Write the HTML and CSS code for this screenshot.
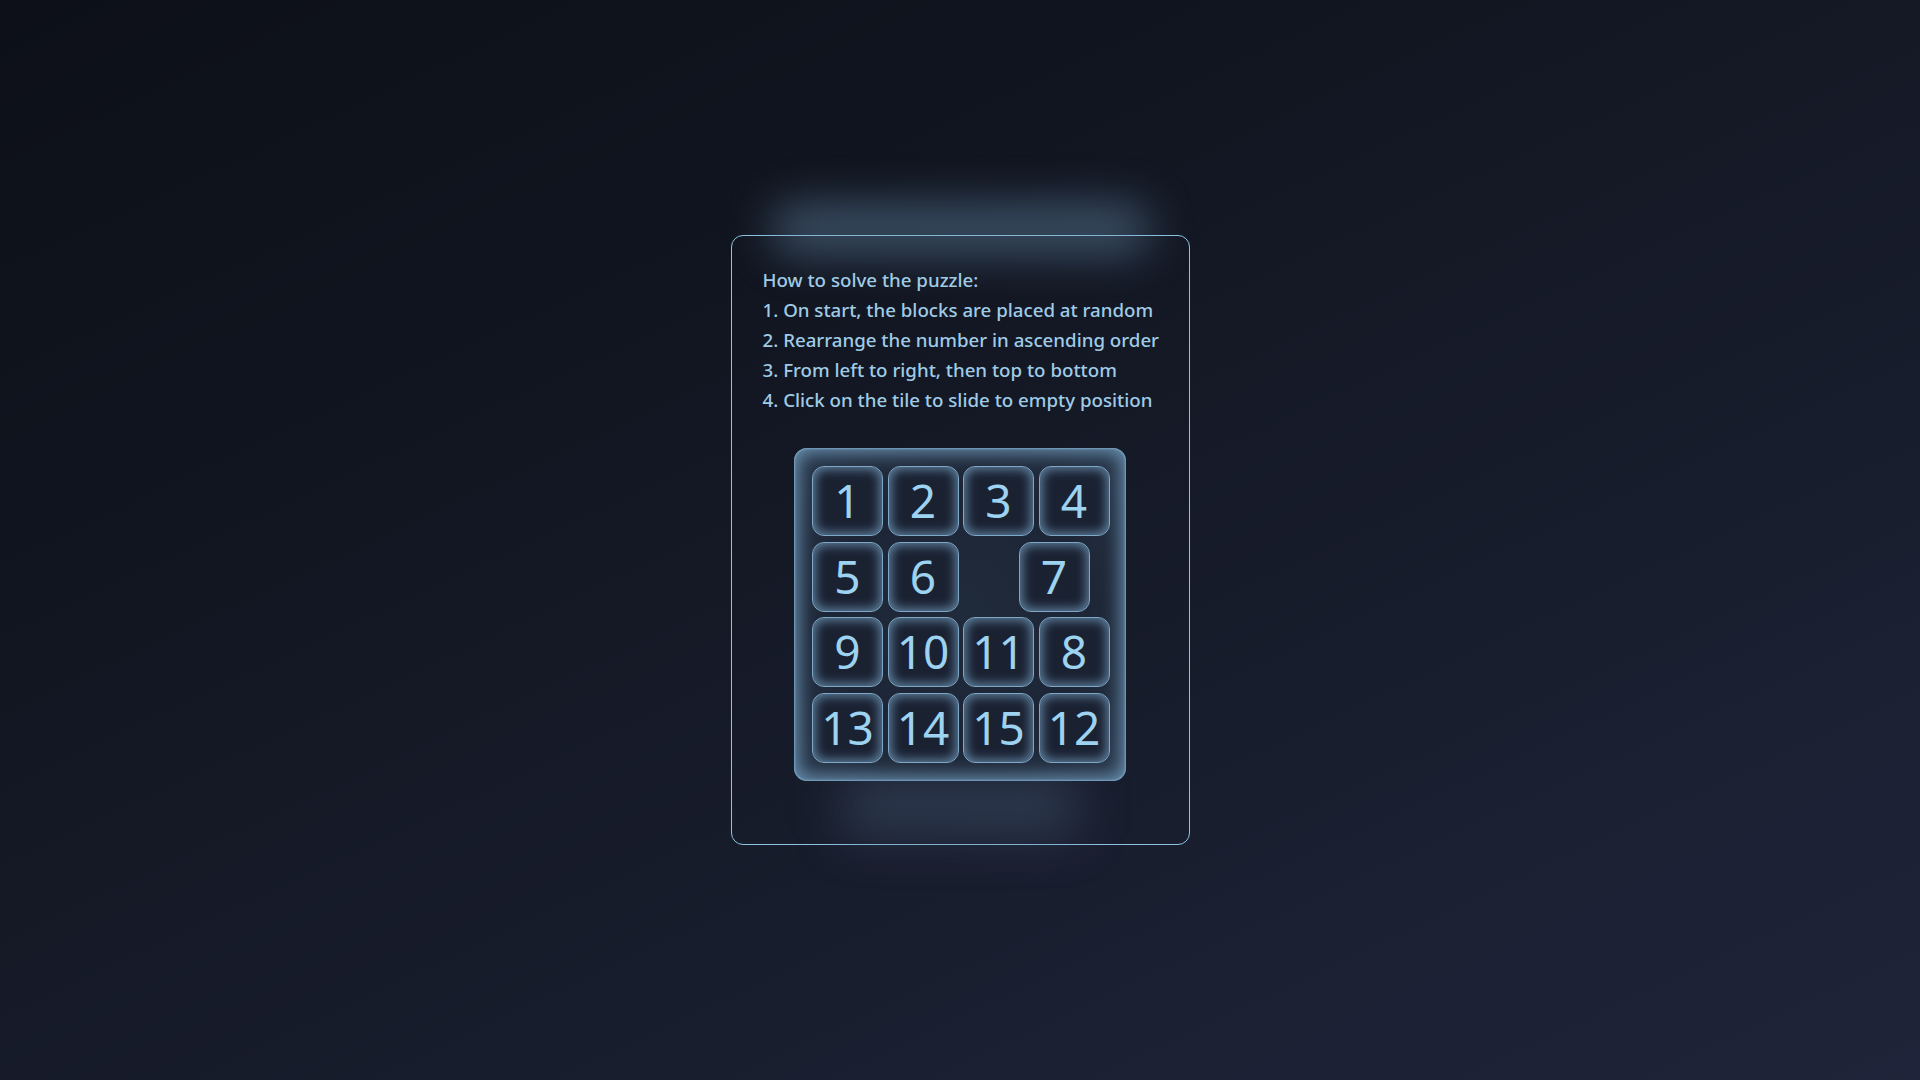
FILE: index.html
```html
<!DOCTYPE html>
<html lang="en">
<head>
<meta charset="utf-8">
<title>Sliding Puzzle</title>
<link rel="stylesheet" href="styles.css">
</head>
<body>
<main class="card">
  <div class="glow-top"></div>
  <div class="instructions">
    <p>How to solve the puzzle:</p>
    <p>1. On start, the blocks are placed at random</p>
    <p>2. Rearrange the number in ascending order</p>
    <p>3. From left to right, then top to bottom</p>
    <p>4. Click on the tile to slide to empty position</p>
  </div>
  <div class="board-wrap">
    <div class="glow-bottom"></div>
    <div class="board">
      <div class="tile">1</div>
      <div class="tile">2</div>
      <div class="tile">3</div>
      <div class="tile">4</div>
      <div class="tile">5</div>
      <div class="tile">6</div>
      <div class="empty"></div>
      <div class="tile sliding">7</div>
      <div class="tile">9</div>
      <div class="tile">10</div>
      <div class="tile">11</div>
      <div class="tile">8</div>
      <div class="tile">13</div>
      <div class="tile">14</div>
      <div class="tile">15</div>
      <div class="tile">12</div>
    </div>
  </div>
</main>
</body>
</html>
```
FILE: styles.css
```css
* { box-sizing: border-box; }
html, body { height: 100%; }
body {
  margin: 0;
  min-height: 100vh;
  display: flex;
  align-items: center;
  justify-content: center;
  background: linear-gradient(155deg, #0d1018 0%, #10141e 25%, #171c2b 60%, #1f243a 100%);
  font-family: "Noto Sans", "Liberation Sans", sans-serif;
  color: #9fcbe6;
}
.card {
  position: relative;
  width: 459px;
  height: 610px;
  border: 1px solid #8fc3e2;
  border-radius: 12px;
  padding: 29px 20px 0 31px;
  display: flex;
  flex-direction: column;
  align-items: center;
}
.glow-top {
  position: absolute;
  left: 40px;
  right: 40px;
  top: -32px;
  height: 50px;
  background: rgba(110, 150, 185, 0.45);
  filter: blur(22px);
  border-radius: 20px;
  pointer-events: none;
}
.instructions {
  position: relative;
  align-self: stretch;
  font-size: 18.7px;
  font-weight: 500;
  line-height: 30px;
}
.instructions p { margin: 0; white-space: nowrap; }
.board-wrap {
  position: relative;
  margin-top: 33px;
  margin-left: -11px;
}
.glow-bottom {
  position: absolute;
  left: 50px;
  right: 50px;
  bottom: -55px;
  height: 60px;
  background: rgba(70, 90, 120, 0.45);
  filter: blur(24px);
  pointer-events: none;
}
.board {
  position: relative;
  display: grid;
  grid-template-columns: repeat(4, 71px);
  grid-template-rows: repeat(4, 70px);
  gap: 5.5px 4.5px;
  padding: 18px 17px 18px 18px;
  width: 332px;
  height: 333px;
  border-radius: 13px;
  background: radial-gradient(ellipse at center, #1f2a3b 0%, #1d2636 55%, #283649 100%);
  box-shadow: inset 0 0 18px 5px rgba(120, 165, 200, 0.8), inset 0 0 2px 1px rgba(140, 180, 210, 0.85);
}
.tile {
  display: flex;
  align-items: center;
  justify-content: center;
  border-radius: 12px;
  background: #1a2232;
  border: 1px solid #7fa8c6;
  box-shadow: inset 0 0 11px 2px rgba(125, 170, 205, 0.75);
  font-size: 46px;
  line-height: 1;
  color: #9dd3f0;
  padding-bottom: 2px;
}
.tile.sliding { transform: translateX(-20px); }
```
